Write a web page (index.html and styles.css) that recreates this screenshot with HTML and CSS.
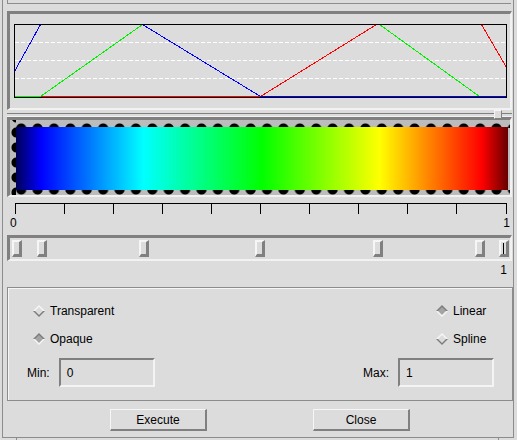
FILE: index.html
```html
<!DOCTYPE html>
<html>
<head>
<meta charset="utf-8">
<link rel="stylesheet" href="styles.css">
</head>
<body>
<div class="window">
  <div class="topstrip"></div>

  <div class="pane graph-pane">
    <svg class="plot" width="493" height="74" viewBox="0 0 493 74" shape-rendering="crispEdges">
      <g stroke="#ffffff" stroke-width="1" stroke-dasharray="4 2" fill="none">
        <line x1="1" y1="18.5" x2="492" y2="18.5"/>
        <line x1="1" y1="36.5" x2="492" y2="36.5"/>
        <line x1="1" y1="54.5" x2="492" y2="54.5"/>
      </g>
      <polyline fill="none" stroke="#ff0000" points="0.5,72.5 246.5,72.5 362.5,0.5 467.5,0.5 492.5,43.5"/>
      <polyline fill="none" stroke="#00ee00" points="0.5,72.5 26.5,72.5 128.5,0.5 365.5,0.5 465.5,72.5 492.5,72.5"/>
      <polyline fill="none" stroke="#0000ff" points="0.5,47.5 26.5,0.5 128.5,0.5 246.5,72.5 492.5,72.5"/>
      <rect x="0.5" y="0.5" width="492" height="73" fill="none" stroke="#000000"/>
    </svg>
  </div>

  <div class="sash-row"><span class="sash"></span></div>

  <div class="pane cbar-pane">
    <div class="cbar-inner">
      <div class="gradient"></div>
    </div>
  </div>

  <svg class="ruler" width="493" height="12" viewBox="0 0 493 12" shape-rendering="crispEdges">
    <g stroke="#000000" stroke-width="1">
      <line x1="0" y1="0.5" x2="492" y2="0.5"/>
      <line x1="0.5" y1="0" x2="0.5" y2="11"/>
      <line x1="49.5" y1="0" x2="49.5" y2="11"/>
      <line x1="98.5" y1="0" x2="98.5" y2="11"/>
      <line x1="147.5" y1="0" x2="147.5" y2="11"/>
      <line x1="196.5" y1="0" x2="196.5" y2="11"/>
      <line x1="245.5" y1="0" x2="245.5" y2="11"/>
      <line x1="294.5" y1="0" x2="294.5" y2="11"/>
      <line x1="343.5" y1="0" x2="343.5" y2="11"/>
      <line x1="392.5" y1="0" x2="392.5" y2="11"/>
      <line x1="441.5" y1="0" x2="441.5" y2="11"/>
      <line x1="491.5" y1="0" x2="491.5" y2="11"/>
    </g>
  </svg>
  <div class="ruler-labels"><span>0</span><span>1</span></div>

  <div class="slider">
    <span class="thumb" style="left:2px"></span>
    <span class="thumb" style="left:27px"></span>
    <span class="thumb" style="left:129px"></span>
    <span class="thumb" style="left:245px"></span>
    <span class="thumb" style="left:363px"></span>
    <span class="thumb" style="left:465px"></span>
    <span class="thumb selected" style="left:489px"></span>
  </div>
  <div class="slider-value">1</div>

  <div class="options">
    <div class="radio-row">
      <label class="radio">
        <svg width="12" height="12" viewBox="0 0 12 12"><polygon points="0,6 6,0 12,6" fill="#f6f6f6"/><polygon points="0,6 6,12 12,6" fill="#7c7c7c"/><polygon points="6,2 10,6 6,10 2,6" fill="#dcdcdc"/></svg>
        <span>Transparent</span>
      </label>
      <label class="radio right">
        <svg width="12" height="12" viewBox="0 0 12 12"><polygon points="0,6 6,0 12,6" fill="#7c7c7c"/><polygon points="0,6 6,12 12,6" fill="#f6f6f6"/><polygon points="6,2 10,6 6,10 2,6" fill="#a4a4a4"/></svg>
        <span>Linear</span>
      </label>
    </div>
    <div class="radio-row">
      <label class="radio">
        <svg width="12" height="12" viewBox="0 0 12 12"><polygon points="0,6 6,0 12,6" fill="#7c7c7c"/><polygon points="0,6 6,12 12,6" fill="#f6f6f6"/><polygon points="6,2 10,6 6,10 2,6" fill="#a4a4a4"/></svg>
        <span>Opaque</span>
      </label>
      <label class="radio right">
        <svg width="12" height="12" viewBox="0 0 12 12"><polygon points="0,6 6,0 12,6" fill="#f6f6f6"/><polygon points="0,6 6,12 12,6" fill="#7c7c7c"/><polygon points="6,2 10,6 6,10 2,6" fill="#dcdcdc"/></svg>
        <span>Spline</span>
      </label>
    </div>
    <div class="field-row">
      <div class="field"><span>Min:</span><div class="input">0</div></div>
      <div class="field"><span>Max:</span><div class="input">1</div></div>
    </div>
  </div>

  <div class="buttons">
    <button class="btn">Execute</button>
    <button class="btn">Close</button>
  </div>
</div>
<div class="next-frame"></div>
</body>
</html>
```
FILE: styles.css
```css
* { box-sizing: border-box; }

body {
  margin: 0;
  width: 517px;
  height: 440px;
  overflow: hidden;
  background: #dcdcdc;
  font-family: "Liberation Sans", Arial, sans-serif;
  font-size: 12px;
  color: #000;
}

.window {
  margin-left: 2px;
  width: 512px;
  height: 438px;
  border-left: 1px solid #8c8c8c;
  border-right: 1px solid #8c8c8c;
  border-bottom: 1px solid #8c8c8c;
}

.topstrip {
  height: 4px;
  margin: 0 2px 0 4px;
  border-left: 1px solid #8c8c8c;
  border-bottom: 1px solid #8c8c8c;
}

.pane {
  border-style: solid;
  border-width: 3px 2px 2px 3px;
  border-color: #808080 #f2f2f2 #f2f2f2 #808080;
}

.graph-pane {
  margin: 7px 1px 0 4px;
  padding: 10px 2px 10px 4px;
}

.plot { display: block; }

.sash-row {
  position: relative;
  height: 7px;
  padding-top: 3px;
  margin: 0 1px 0 4px;
}
.sash-row::before {
  content: "";
  display: block;
  height: 2px;
  border-top: 1px solid #808080;
  border-bottom: 1px solid #f2f2f2;
}
.sash {
  position: absolute;
  left: 487px;
  top: 0;
  width: 8px;
  height: 9px;
  z-index: 2;
  background: #dcdcdc;
  border-style: solid;
  border-width: 1px;
  border-color: #f6f6f6 #808080 #808080 #f6f6f6;
}

.cbar-pane {
  margin: 0 1px 0 4px;
  height: 80px;
}

.cbar-inner {
  height: 75px;
  padding: 7px 2px 5px 6px;
  background-color: #bcbcbc;
  background-image:
    radial-gradient(ellipse 5.5px 5px at 50% 100%, #000 80%, transparent 100%),
    radial-gradient(ellipse 5.5px 5px at 50% 0%, #000 80%, transparent 100%),
    radial-gradient(ellipse 5px 5.5px at 100% 50%, #000 80%, transparent 100%);
  background-size: 16.4px 6px, 16.4px 5px, 6px 15px;
  background-position: 3px 2px, 3px 70px, 0 5px;
  background-repeat: repeat-x, repeat-x, repeat-y;
}

.gradient {
  height: 63px;
  background: linear-gradient(to right,
    rgb(0, 0, 88) 0%,
    #0000ff 5.1%,
    #00ffff 25.9%,
    #00ff00 50%,
    #ffff00 73.9%,
    #ff0000 94.7%,
    rgb(102, 0, 0) 100%);
}

.ruler {
  display: block;
  margin: 6px 0 0 12px;
}

.ruler-labels {
  display: flex;
  justify-content: space-between;
  height: 14px;
  line-height: 14px;
  margin: 1px 3px 0 7px;
}

.slider {
  position: relative;
  height: 26px;
  margin: 5px 1px 0 4px;
  border-style: solid;
  border-width: 3px 2px 2px 3px;
  border-color: #808080 #f2f2f2 #f2f2f2 #808080;
}

.thumb {
  position: absolute;
  top: 2px;
  width: 10px;
  height: 17px;
  background: #dcdcdc;
  border-style: solid;
  border-width: 2px 3px 3px 2px;
  border-color: #f6f6f6 #808080 #808080 #f6f6f6;
}
.thumb.selected::after {
  content: "";
  position: absolute;
  left: 2px;
  top: 1px;
  width: 1px;
  height: 11px;
  background: #000;
}

.slider-value {
  text-align: right;
  height: 14px;
  line-height: 14px;
  margin: 2px 6px 0 0;
}

.options {
  height: 114px;
  margin: 10px 0 0 4px;
  padding: 14px 18px 0 19px;
  border: 1px solid #8c8c8c;
  box-shadow: inset 1px 1px 0 #f6f6f6;
}

.radio-row {
  display: flex;
  justify-content: space-between;
  align-items: center;
  height: 18px;
  margin-bottom: 10px;
  padding-left: 6px;
}

.radio {
  display: flex;
  align-items: center;
  gap: 5px;
}
.radio svg { display: block; }
.radio.right { width: 58px; }

.field-row {
  display: flex;
  justify-content: space-between;
  align-items: center;
  height: 29px;
}

.field {
  display: flex;
  align-items: center;
  gap: 9px;
}

.input {
  display: flex;
  align-items: center;
  width: 96px;
  height: 29px;
  padding-left: 6px;
  border-style: solid;
  border-width: 2px 2px 2px 2px;
  border-color: #808080 #f4f4f4 #f4f4f4 #808080;
}

.buttons {
  display: flex;
  gap: 106px;
  margin-top: 8px;
  padding-left: 107px;
}

.btn {
  width: 97px;
  height: 22px;
  padding: 0;
  background: #dcdcdc;
  font-family: "Liberation Sans", Arial, sans-serif;
  font-size: 12px;
  color: #000;
  border-style: solid;
  border-width: 1px 2px 2px 1px;
  border-color: #f6f6f6 #808080 #808080 #f6f6f6;
}

.next-frame {
  margin-left: 16px;
  width: 483px;
  height: 2px;
  border-left: 1px solid #8c8c8c;
  border-right: 1px solid #8c8c8c;
}
```
